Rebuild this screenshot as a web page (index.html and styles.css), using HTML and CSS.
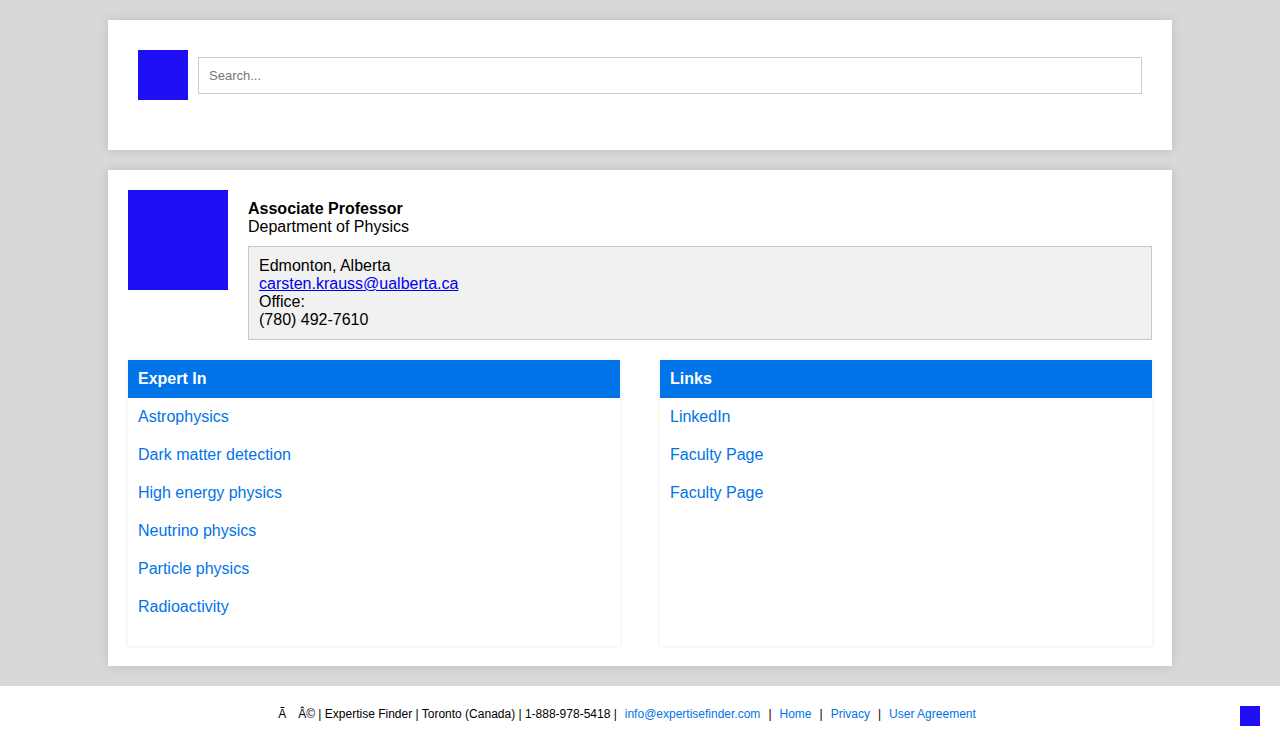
FILE: index.html
```html
<!DOCTYPE html>
<html lang="en">
<head>
<meta charset="utf-8">
<title>Expertise Finder</title>
<link rel="stylesheet" href="styles.css">
</head>
<body>
<div class="page">
  <header class="card header-card">
    <div class="search-row">
      <div class="logo"></div>
      <input class="search" type="text" placeholder="Search...">
    </div>
  </header>
  <main class="card profile-card">
    <div class="profile-top">
      <div class="photo"></div>
      <div class="profile-info">
        <div class="title">Associate Professor</div>
        <div class="dept">Department of Physics</div>
        <div class="contact">
          <div>Edmonton, Alberta</div>
          <div><a class="email" href="#">carsten.krauss@ualberta.ca</a></div>
          <div>Office:</div>
          <div>(780) 492-7610</div>
        </div>
      </div>
    </div>
    <div class="columns">
      <section class="panel">
        <div class="panel-head">Expert In</div>
        <ul class="panel-list">
          <li><a href="#">Astrophysics</a></li>
          <li><a href="#">Dark matter detection</a></li>
          <li><a href="#">High energy physics</a></li>
          <li><a href="#">Neutrino physics</a></li>
          <li><a href="#">Particle physics</a></li>
          <li><a href="#">Radioactivity</a></li>
        </ul>
      </section>
      <section class="panel">
        <div class="panel-head">Links</div>
        <ul class="panel-list">
          <li><a href="#">LinkedIn</a></li>
          <li><a href="#">Faculty Page</a></li>
          <li><a href="#">Faculty Page</a></li>
        </ul>
      </section>
    </div>
  </main>
</div>
<footer class="footer">
  <div class="footer-text"><span class="glyph">Ã</span><span>Â© | Expertise Finder | Toronto (Canada) | 1-888-978-5418 |</span><a class="first-link" href="#">info@expertisefinder.com</a><span class="sep">|</span><a href="#">Home</a><span class="sep">|</span><a href="#">Privacy</a><span class="sep">|</span><a href="#">User Agreement</a></div>
  <div class="to-top"></div>
</footer>
</body>
</html>
```
FILE: styles.css
```css
html, body {
  margin: 0;
  padding: 0;
}
body {
  background: #d8d8d8;
  font-family: "Liberation Sans", Arial, sans-serif;
  color: #000;
}
.page {
  width: 1064px;
  margin: 0 auto;
  padding: 20px 0 20px;
  display: flex;
  flex-direction: column;
  gap: 20px;
}
.card {
  background: #fff;
  box-shadow: 0 0 10px rgba(0, 0, 0, 0.12);
}
.header-card {
  padding: 30px 30px 50px;
}
.search-row {
  display: flex;
  align-items: center;
  gap: 10px;
}
.logo {
  width: 50px;
  height: 50px;
  background: #1f0ff5;
  flex: none;
}
.search {
  flex: 1;
  height: 37px;
  box-sizing: border-box;
  border: 1px solid #cccccc;
  padding: 0 10px;
  font-family: "Liberation Sans", Arial, sans-serif;
  font-size: 13px;
  color: #333;
  outline: none;
  margin: 0;
}
.search::placeholder {
  color: #777;
}
.profile-card {
  padding: 20px;
}
.profile-top {
  display: flex;
  gap: 20px;
}
.photo {
  width: 100px;
  height: 100px;
  background: #1f0ff5;
  flex: none;
}
.profile-info {
  flex: 1;
  padding-top: 10px;
  font-size: 16px;
  line-height: 18px;
}
.title {
  font-weight: bold;
}
.contact {
  margin-top: 10px;
  background: #f1f1f1;
  border: 1px solid #c8c8c8;
  padding: 10px;
}
.email {
  color: #0000ee;
  text-decoration: underline;
}
.columns {
  margin-top: 20px;
  display: grid;
  grid-template-columns: 1fr 1fr;
  gap: 40px;
}
.panel {
  background: #fff;
  box-shadow: 0 0 4px rgba(0, 0, 0, 0.1);
}
.panel-head {
  background: #0074e8;
  color: #fff;
  font-weight: bold;
  font-size: 16px;
  line-height: 38px;
  padding: 0 10px;
}
.panel-list {
  list-style: none;
  margin: 0;
  padding: 0 0 20px;
}
.panel-list li {
  line-height: 38px;
  font-size: 16px;
  padding: 0 10px;
}
.panel-list a {
  color: #0074e8;
  text-decoration: none;
}
.footer {
  position: relative;
  background: #fff;
  height: 57px;
  display: flex;
  align-items: center;
  justify-content: center;
}
.footer-text {
  font-size: 12px;
  line-height: 14px;
  padding-right: 26px;
  padding-bottom: 1px;
  white-space: nowrap;
}
.footer-text .glyph {
  margin-right: 12px;
}
.footer-text a {
  color: #0074e8;
  text-decoration: none;
}
.footer-text .first-link {
  margin-left: 8px;
}
.sep {
  margin: 0 8px;
}
.to-top {
  position: absolute;
  right: 20px;
  top: 20px;
  width: 20px;
  height: 20px;
  background: #1f0ff5;
}
```
